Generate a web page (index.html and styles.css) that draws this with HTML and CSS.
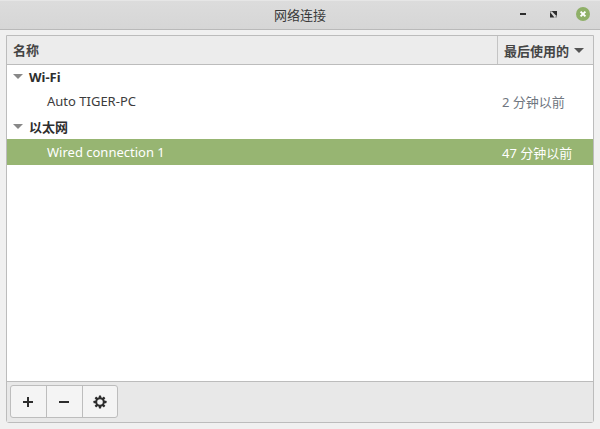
FILE: index.html
```html
<!DOCTYPE html>
<html lang="zh">
<head>
<meta charset="utf-8">
<title>网络连接</title>
<link rel="stylesheet" href="styles.css">
</head>
<body>
<div class="window">
  <header class="titlebar">
    <span class="spacer"></span>
    <h1 class="title">网络连接</h1>
    <div class="controls">
      <svg class="ctl" width="16" height="16" viewBox="0 0 16 16"><rect x="6" y="7" width="6" height="2" fill="#2d2d2d"/></svg>
      <svg class="ctl" width="16" height="16" viewBox="0 0 16 16"><path d="M6.500 5H12v5.500z" fill="#2d2d2d"/><path d="M9.500 11.500H5V6z" fill="#2d2d2d"/><path d="M5 5h2.500L5 7.500zM12 11.500H9.500l2.500-2.500z" fill="#8a8a8a"/></svg>
      <svg class="ctl" width="14" height="14" viewBox="0 0 14 14"><circle cx="7" cy="7" r="7" fill="#8fb068"/><path d="M4.600 4.600l4.800 4.800M9.400 4.600l-4.800 4.800" stroke="#fff" stroke-width="2"/></svg>
    </div>
  </header>
  <main class="content">
    <section class="frame">
      <div class="head">
        <div class="head-name">名称</div>
        <div class="head-used">最后使用的<svg class="sort" width="10" height="5" viewBox="0 0 10 5"><path d="M0 0h10L5 5z" fill="#555"/></svg></div>
      </div>
      <div class="list">
        <div class="group"><svg class="arrow" width="10" height="5" viewBox="0 0 10 5"><path d="M0 0h10L5 5z" fill="#888"/></svg><span>Wi-Fi</span></div>
        <div class="row"><span>Auto TIGER-PC</span><span class="time dim">2 分钟以前</span></div>
        <div class="group"><svg class="arrow" width="10" height="5" viewBox="0 0 10 5"><path d="M0 0h10L5 5z" fill="#888"/></svg><span>以太网</span></div>
        <div class="row selected"><span>Wired connection 1</span><span class="time">47 分钟以前</span></div>
      </div>
      <div class="toolbar">
        <div class="btns">
          <button class="btn"><svg width="12" height="12" viewBox="0 0 12 12"><path d="M5 1h2v4h4v2H7v4H5V7H1V5h4z" fill="#2d2d2d"/></svg></button>
          <button class="btn"><svg width="12" height="12" viewBox="0 0 12 12"><rect x="1" y="5" width="10" height="2" fill="#2d2d2d"/></svg></button>
          <button class="btn"><svg width="14" height="14" viewBox="0 0 14 14"><g fill="#2d2d2d"><rect x="5.800" y="0.500" width="2.400" height="13" rx=".4"/><rect x="5.800" y="0.500" width="2.400" height="13" rx=".4" transform="rotate(45 7 7)"/><rect x="5.800" y="0.500" width="2.400" height="13" rx=".4" transform="rotate(90 7 7)"/><rect x="5.800" y="0.500" width="2.400" height="13" rx=".4" transform="rotate(135 7 7)"/></g><circle cx="7" cy="7" r="3.800" fill="#f4f4f4" stroke="#2d2d2d" stroke-width="2"/></svg></button>
        </div>
      </div>
    </section>
  </main>
</div>
</body>
</html>
```
FILE: styles.css
```css
* { box-sizing: border-box; }
html, body { margin: 0; padding: 0; }
body {
  width: 600px;
  height: 429px;
  overflow: hidden;
  font-family: "Noto Sans", "Noto Sans CJK SC", sans-serif;
  font-size: 13px;
  color: #333;
  background: #f0f0f0;
}
.window { width: 600px; height: 429px; display: flex; flex-direction: column; }
.titlebar {
  height: 30px;
  flex: none;
  display: flex;
  align-items: center;
  justify-content: space-between;
  background: linear-gradient(#dcdcdc, #d6d6d6);
  border-top: 1px solid #e6e6e6;
  border-bottom: 1px solid #b9b9b9;
}
.spacer { width: 100px; }
.title { margin: 0; font-size: 13px; font-weight: 400; color: #3a3a3a; line-height: 28px; }
.controls { width: 100px; display: flex; align-items: center; justify-content: flex-end; gap: 15px; padding-right: 10px; padding-bottom: 2px; }
.ctl { display: block; }
.content { flex: 1; padding: 5px 6px 6px; display: flex; min-height: 0; }
.frame {
  flex: 1;
  display: flex;
  flex-direction: column;
  border: 1px solid #bcbcbc;
  border-radius: 0 0 3px 3px;
  min-width: 0;
}
.head {
  height: 29px;
  flex: none;
  display: flex;
  background: #ececec;
  border-bottom: 1px solid #bcbcbc;
  font-weight: 700;
  color: #444;
  font-size: 13px;
}
.head-name { flex: 1; padding-left: 6px; line-height: 28px; }
.head-used {
  width: 96px;
  padding-left: 6px;
  border-left: 1px solid #c4c4c4;
  display: flex;
  align-items: center;
  gap: 5px;
}
.sort { display: block; }
.list { flex: 1; background: #fff; border-bottom: 1px solid #bcbcbc; }
.group {
  height: 25px;
  display: flex;
  align-items: center;
  padding-left: 6px;
  gap: 6px;
  font-weight: 700;
  color: #2e2e2e;
}
.group:first-child { height: 23px; }
.arrow { display: block; }
.row {
  height: 26px;
  display: flex;
  align-items: center;
  justify-content: space-between;
  padding-left: 40px;
  color: #3c3c3c;
}
.time { width: 91px; }
.dim { color: #6f7680; }
.selected { background: #97b572; color: #fff; }
.toolbar { height: 40px; flex: none; background: #e8e8e8; padding: 3px; }
.btns {
  display: inline-flex;
  height: 33px;
  border: 1px solid #bdbdbd;
  border-radius: 3px;
  background: #f4f4f4;
}
.btn {
  width: 36px;
  padding: 0 1px 0 0;
  border: 0;
  border-left: 1px solid #bdbdbd;
  background: none;
  display: flex;
  align-items: center;
  justify-content: center;
}
.btn:first-child { border-left: 0; width: 35px; }
.btn:last-child { width: 35px; padding: 0; }
```
